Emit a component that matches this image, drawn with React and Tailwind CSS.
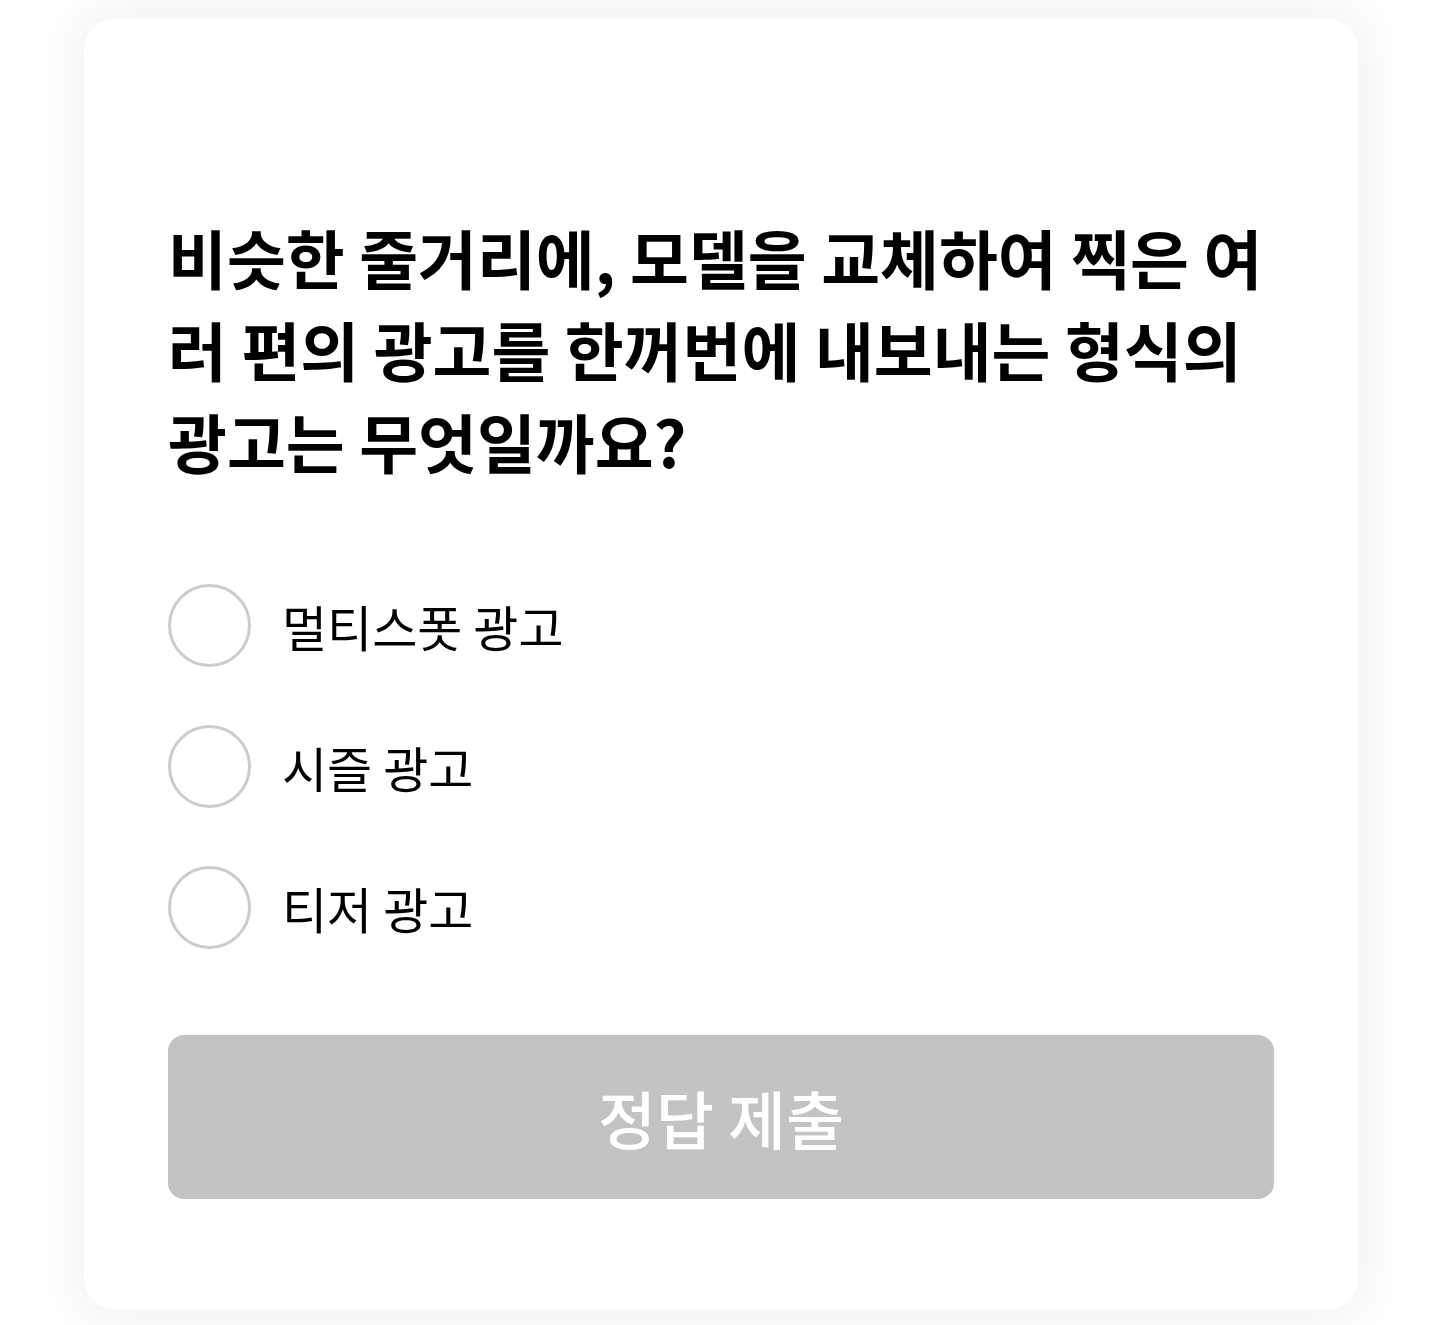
export default function App() {
  const options = ["멀티스폿 광고", "시즐 광고", "티저 광고"];
  return (
    <div
      className="min-h-[1325px] w-full bg-white pl-[84px] pr-[82px] pt-[18px] pb-[15px]"
      style={{ fontFamily: '"Noto Sans CJK KR", "Noto Sans", sans-serif' }}
    >
      <div className="flex h-[1292px] flex-col rounded-[32px] bg-white px-[84px] pt-[192px] shadow-[0_0_40px_10px_rgba(0,0,0,0.05)]">
        <h1 className="text-[64px] font-bold leading-[92px] text-black">
          비슷한 줄거리에, 모델을 교체하여 찍은 여러 편의 광고를 한꺼번에 내보내는 형식의 광고는 무엇일까요?
        </h1>
        <div className="mt-[98px] flex flex-col gap-[58px]">
          {options.map((o) => (
            <label key={o} className="flex items-center gap-[31px]">
              <span className="h-[83px] w-[83px] shrink-0 rounded-full border-[3px] border-[#cccccc] bg-white" />
              <span className="text-[49px] leading-none text-black">{o}</span>
            </label>
          ))}
        </div>
        <button className="mt-[86px] flex h-[164px] w-full items-center justify-center rounded-[16px] bg-[#c3c3c3] text-[63px] font-medium text-white">
          정답 제출
        </button>
      </div>
    </div>
  );
}
